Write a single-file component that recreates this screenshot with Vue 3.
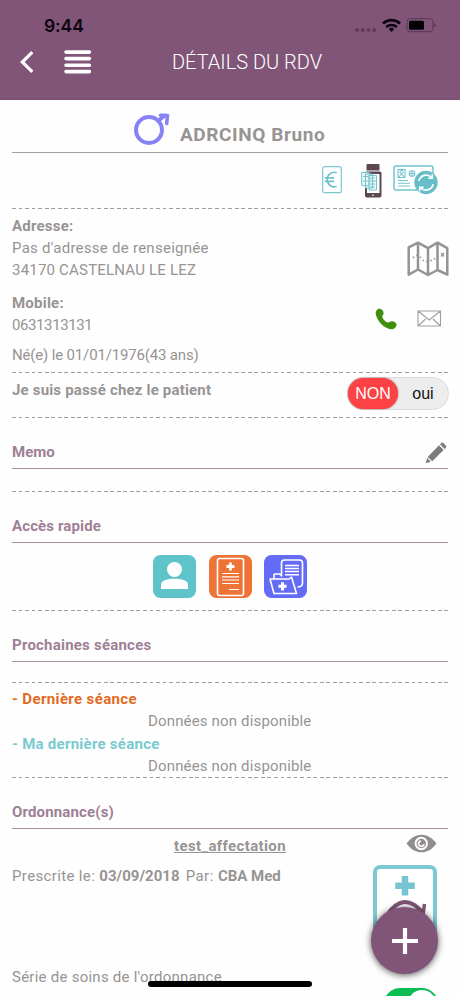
<script setup>
import { ref } from 'vue'

const visited = ref(false)
const sessions = [
  { id: 'last', label: '- Dernière séance', value: 'Données non disponible' },
  { id: 'mine', label: '- Ma dernière séance', value: 'Données non disponible' },
]
</script>

<template>
  <div class="screen">
    <header class="header">
      <div class="status">
        <span class="time">9:44</span>
        <svg class="status-icons" width="84" height="18" viewBox="0 0 84 18">
          <g fill="#5f3a5a">
            <circle cx="5" cy="13" r="1.900" /><circle cx="10.800" cy="13" r="1.900" />
            <circle cx="16.500" cy="13" r="1.900" /><circle cx="22.200" cy="13" r="1.900" />
          </g>
          <g fill="none" stroke="#0d0312" stroke-width="2.700">
            <path d="M31 6.500a12.500 12.500 0 0 1 17 0" />
            <path d="M34.200 10a8 8 0 0 1 10.600 0" />
          </g>
          <path d="M36.700 12a4.300 4.300 0 0 1 5.600 0L39.500 15z" fill="#0d0312" />
          <rect x="55" y="1.700" width="26" height="13" rx="3.500" fill="none" stroke="#5a3554" stroke-width="1" />
          <rect x="57" y="3.700" width="15" height="9" rx="1.500" fill="#050006" />
          <path d="M82.300 6.200q1.600.6 1.600 2t-1.600 2z" fill="#5a3554" />
        </svg>
      </div>
      <div class="nav">
        <svg class="back" width="16" height="24" viewBox="0 0 16 24">
          <path d="M13.300 2.200 3.300 12l10 9.800" fill="none" stroke="#fff" stroke-width="3.200" />
        </svg>
        <svg class="burger" width="28" height="24" viewBox="0 0 28 24">
          <path d="M2 2.100h23.400M2 8.600h23.400M2 15.200h23.400M2 21.600h23.400" stroke="#fff" stroke-width="3.600" stroke-linecap="round" />
        </svg>
        <h1 class="title">DÉTAILS DU RDV</h1>
      </div>
    </header>

    <main class="content">
      <section class="patient">
        <svg width="40" height="36" viewBox="0 0 40 36">
          <g fill="none" stroke="#8783f6" stroke-width="4">
            <circle cx="16" cy="19" r="13" />
            <path d="m25.500 9.500 7-5.500" />
            <path d="M27.500 4.300 34.500 4.500 33.700 12.500" stroke-linejoin="round" stroke-linecap="round" stroke-width="3.600" />
          </g>
        </svg>
        <span class="patient-name">ADRCINQ Bruno</span>
      </section>

      <section class="tools">
        <svg width="20" height="28" viewBox="0 0 20 28">
          <rect x=".7" y=".7" width="18.600" height="26" rx="2" fill="#fff" stroke="#7cc8d0" stroke-width="1.200" />
          <path d="M14.800 6.700A7.300 7.300 0 1 0 14.800 20.500M2.700 11.800h9.500M2.700 15.300h9.500" fill="none" stroke="#6fc2c9" stroke-width="1.700" />
        </svg>
        <svg class="reader" width="22" height="34" viewBox="0 0 22 34">
          <path d="M6.500 0h11q1 0 1 1v5.500h-13V1q0-1 1-1z" fill="#5c4852" />
          <rect x="4" y="7.500" width="16.500" height="26" rx="1.800" fill="#5c4852" />
          <rect x="6" y="10" width="12.500" height="19" fill="#fff" />
          <g fill="#eafafa" stroke="#72c5c8" stroke-width="1">
            <path d="M8 11.500h7.500V26H8zM4.500 10h7v14h-7zM.6 8.600h7.500v13H.6z" />
            <path d="M2 12.500h5M4.500 10.500v4M2 17h5M9 14h5M9 17h6M9 20h5M9 23h5" fill="none" />
          </g>
          <circle cx="12" cy="31.200" r=".8" fill="#fff" />
        </svg>
        <svg class="card" width="46" height="30" viewBox="0 0 46 30">
          <rect x="1" y="1" width="39" height="24" rx="2" fill="#fff" stroke="#72c5cf" stroke-width="1.500" />
          <g fill="none" stroke="#72c5cf" stroke-width="1.100">
            <rect x="5" y="4.500" width="7" height="8" />
            <circle cx="8.500" cy="7" r="1.500" /><path d="M6 12q2.500-5 5 0" />
            <circle cx="19" cy="8.500" r="2.800" /><path d="M16.500 8.500h5M19 6v5" />
            <path d="M5 15.500h10M5 18.200h12M5 21h12" />
          </g>
          <circle cx="33" cy="17.500" r="11.700" fill="#67bdc8" />
          <g fill="none" stroke="#fff" stroke-width="1.600">
            <path d="M25.800 16a7.500 7.500 0 0 1 13-3.200M40.200 19.300a7.500 7.500 0 0 1-13 3.200" />
            <path d="M39.300 9.200v4h-4M26.700 26.200v-4h4" />
          </g>
        </svg>
      </section>

      <section class="details dashed-top">
        <div class="block address">
          <div>
            <p class="line strong">Adresse:</p>
            <p class="line street">Pas d'adresse de renseignée</p>
            <p class="line city">34170 CASTELNAU LE LEZ</p>
          </div>
          <svg class="map" width="42" height="36" viewBox="0 0 42 36">
            <path d="M1.700 6.300 11 1.700l10 5.500 9.500-5.500 9.800 5.500v26.500L30.500 29 21 34l-10-5.500-9.300 5.200zM11 2v26.500M21 7.200V34M30.500 2v27" fill="none" stroke="#979392" stroke-width="2.500" stroke-linejoin="round" />
            <path d="M6 17q4-5 8 0t8 3q6-1 9-6" fill="none" stroke="#979392" stroke-width="1.500" stroke-dasharray="1.500 2.500" />
            <path d="m34 12 3 3.500m0-3.500-3 3.500" stroke="#979392" stroke-width="1.200" />
          </svg>
        </div>
        <div class="block mobile">
          <div>
            <p class="line strong mobile-label">Mobile:</p>
            <p class="line number">0631313131</p>
          </div>
          <svg class="phone" width="22" height="22" viewBox="0 0 22 22">
            <path d="M.7 5C.5 2.500 3 .5 4.800.7 7 1 8.600 3 8.600 5.200c0 1.500-1.300 2-1.300 3.200 0 2.300 3.600 6 6 6 1.200 0 1.900-1.200 3.300-1.200 2.300 0 4.900 1.500 4.900 3.600 0 2.200-2.200 4.600-5 4.500C8.800 21 .9 11.500.7 5z" fill="#3f8f0c" />
          </svg>
          <svg class="mail" width="25" height="17" viewBox="0 0 25 17">
            <path d="M1 1h22.500v15H1zM1 1l11.200 9L23.500 1M1 16l7.500-7M23.500 16 16 9" fill="none" stroke="#a19e9d" stroke-width="1.100" />
          </svg>
        </div>
        <p class="line birth">Né(e) le 01/01/1976(43 ans)</p>
      </section>

      <section class="visited dashed-top">
        <p class="line strong visited-label">Je suis passé chez le patient</p>
        <div class="switch" @click="visited = !visited">
          <span class="switch-on">NON</span>
          <span class="switch-off">oui</span>
        </div>
      </section>

      <section class="memo dashed-top">
        <div class="heading">
          <h2>Memo</h2>
          <svg class="pencil" width="22" height="22" viewBox="0 0 22 22">
            <path d="m.7 21.300 1.500-5.200 3.600 3.600zM2.700 14.900 14 3.300l4.600 4.600L7.300 19.200zM15 2.300l1.200-1.200q1.100-1 2.200 0l2.400 2.400q1 1.100 0 2.200l-1.200 1.200z" fill="#7d7b7c" />
          </svg>
        </div>
      </section>

      <section class="quick dashed-top">
        <div class="heading"><h2 class="quick-title">Accès rapide</h2></div>
        <div class="apps">
          <svg width="43" height="43" viewBox="0 0 43 43">
            <rect width="43" height="43" rx="7.500" fill="#5fc3ca" />
            <circle cx="21.500" cy="14.500" r="7.500" fill="#fff" />
            <path d="M8 34v-4.500C8 25.500 15 23.800 21.500 23.800S35 25.500 35 29.500V34z" fill="#fff" />
          </svg>
          <svg width="43" height="43" viewBox="0 0 43 43">
            <rect width="43" height="43" rx="7.500" fill="#ed7436" />
            <rect x="8.500" y="3.500" width="26" height="37" rx="2" fill="none" stroke="#fff" stroke-width="1.600" />
            <path d="M21.500 7.500v8M17.500 11.500h8" stroke="#fff" stroke-width="2.800" />
            <path d="M13 18.500h17M13 21.800h17M13 25h17M13 28.500h17M20 34.500h10" stroke="#fff" stroke-width="1.200" />
          </svg>
          <svg width="43" height="43" viewBox="0 0 43 43">
            <rect width="43" height="43" rx="7.500" fill="#646cf6" />
            <g fill="none" stroke="#fff" stroke-width="1.600" stroke-linejoin="round">
              <path d="M17.500 21V8q0-3 3-3h15q3 0 3 3v20q0 4-5 4M21 10.500h14M21 13.500h14M21 16.500h14M21 19.800h14" />
              <path d="M10 24v-4q0-1 1-1h5l2 2.500M6 24h19l2.500-2 5 16.500H10z" fill="#646cf6" />
              <path d="M18.500 27.200v8.200M14.400 31.300h8.200" stroke-width="3" />
            </g>
          </svg>
        </div>
      </section>

      <section class="next dashed-top">
        <div class="heading"><h2 class="next-title">Prochaines séances</h2></div>
      </section>

      <section class="sessions dashed-top">
        <template v-for="s in sessions" :key="s.id">
          <p class="line strong" :class="s.id">{{ s.label }}</p>
          <p class="line empty">{{ s.value }}</p>
        </template>
      </section>

      <section class="orders dashed-top">
        <div class="heading"><h2 class="orders-title">Ordonnance(s)</h2></div>
        <div class="order-head">
          <a class="order-name">test_affectation</a>
          <svg class="eye" width="31" height="19" viewBox="0 0 31 19">
            <path d="M.5 9.500C9-2.300 22-2.300 30.500 9.500 22 21.300 9 21.300.5 9.500z" fill="#918d8c" />
            <circle cx="15.300" cy="9.500" r="5.700" fill="none" stroke="#fff" stroke-width="2" />
            <path d="M15 7a2.700 2.700 0 1 0 3 3" fill="none" stroke="#fff" stroke-width="1.600" />
          </svg>
        </div>
        <p class="line prescribed">
          <span class="pre-a">Prescrite le: </span><b class="pre-b">03/09/2018</b><span class="pre-c">Par: </span><b class="pre-d">CBA Med</b>
        </p>
        <p class="line series">Série de soins de l'ordonnance</p>
      </section>
    </main>

    <svg class="document" width="66" height="90" viewBox="0 0 66 90">
      <rect x="2" y="2" width="60" height="86" rx="5" fill="#fff" stroke="#7cc8d3" stroke-width="4" />
      <path d="M32 11v19.500M22.200 20.700h19.600" stroke="#77c5d2" stroke-width="6.500" />
      <path d="M14 50Q31 25 50 48" fill="none" stroke="#805577" stroke-width="4" />
      <path d="m51.500 39-1.500 11-9-3" fill="none" stroke="#805577" stroke-width="3.500" />
    </svg>
    <div class="toggle"><span class="knob"></span></div>
    <button class="fab" aria-label="Ajouter">
      <svg width="26" height="26" viewBox="0 0 26 26">
        <path d="M13 0v26M0 13h26" stroke="#fff" stroke-width="4.200" />
      </svg>
    </button>
    <div class="home-bar"></div>
  </div>
</template>

<style>
body {
  margin: 0;
  overflow: hidden;
  background: #fff;
}
</style>

<style scoped>
.screen {
  position: relative;
  width: 460px;
  height: 996px;
  overflow: hidden;
  background: #fefefe;
  color: #979493;
  font-family: Roboto, "Liberation Sans", sans-serif;
}
svg { display: block; flex: none; }
p, h1, h2 { margin: 0; }
.header {
  height: 100px;
  box-sizing: border-box;
  background: #805577;
  border-bottom: 1px solid #7a4f71;
}
.status {
  display: flex;
  justify-content: space-between;
  height: 44px;
  padding: 17px 24px 0 44px;
  box-sizing: border-box;
}
.time {
  font: 600 17.500px/18px Inter, sans-serif;
  color: #0d0312;
  letter-spacing: -0.100px;
}
.status-icons { margin-right: .5px; }
.nav { display: flex; align-items: center; height: 36px; padding-left: 19px; }
.burger { margin-left: 29px; }
.title {
  margin-left: 80px;
  font-size: 20px;
  font-weight: 300;
  line-height: 24px;
  color: #fff;
  white-space: nowrap;
}
.content { padding: 0 12px; }
.patient {
  display: flex;
  height: 52.500px;
  padding-left: 121px;
  border-bottom: 1.500px solid #a79da4;
  box-sizing: border-box;
}
.patient svg { margin-top: 11px; }
.patient-name {
  margin: 22.500px 0 0 7px;
  font-size: 19px;
  font-weight: 700;
  line-height: 24px;
  letter-spacing: .6px;
}
.tools {
  display: flex;
  justify-content: flex-end;
  height: 55.500px;
  padding: 11px 9px 0 0;
  box-sizing: border-box;
}
.tools svg:first-child { margin-top: 2px; }
.reader { margin-left: 19px; }
.card { margin-left: 10px; margin-top: 1.500px; }
.dashed-top {
  background: repeating-linear-gradient(90deg, #a09c9e 0 3.800px, transparent 3.800px 6.550px) 0 0 / 100% 1.200px no-repeat;
}
.line { font-size: 15px; line-height: 22px; white-space: nowrap; }
.strong { font-weight: 700; letter-spacing: .22px; }
.street { letter-spacing: .26px; }
.city { letter-spacing: .2px; }
.number { letter-spacing: -.4px; }
.details { height: 163.500px; padding-top: 7px; box-sizing: border-box; }
.block { display: flex; }
.address { justify-content: space-between; }
.map { margin: 26px -1px 0 0; }
.mobile { margin-top: 10.500px; }
.mobile > div { flex: 1; }
.phone { margin: 16px 20px 0 0; }
.mail { margin: 18px 6px 0 0; }
.birth { margin-top: 8px; letter-spacing: -.16px; }
.visited {
  display: flex;
  justify-content: space-between;
  height: 45.500px;
  padding-top: 5.500px;
  box-sizing: border-box;
}
.visited-label { margin-top: 2px; letter-spacing: .18px; }
.switch {
  display: flex;
  width: 102px;
  height: 33px;
  margin-right: -1px;
  box-sizing: border-box;
  border: 1px solid #dcdcdc;
  border-radius: 17px;
  background: #ededed;
  font: 16px/31px "Liberation Sans", sans-serif;
  color: #111;
  text-align: center;
}
.switch-on {
  width: 50px;
  border-radius: 16px;
  background: #fd4245;
  box-shadow: 0 0 2px #8a5a5a;
  color: #fff;
}
.switch-off { flex: 1; }
.heading {
  display: flex;
  justify-content: space-between;
  height: 52px;
  padding-top: 24px;
  box-sizing: border-box;
  border-bottom: 1.500px solid #a78d9f;
}
h2 { font-size: 15px; line-height: 22px; font-weight: 700; color: #9e8096; }
.quick-title { letter-spacing: .12px; }
.next-title { letter-spacing: .22px; }
.orders-title { letter-spacing: .15px; }
.pencil { margin: 1px 1px 0 0; }
.memo { height: 74px; }
.quick { height: 119px; }
.apps { display: flex; justify-content: center; gap: 12.500px; padding: 12px 0 0; }
.next { height: 71.500px; }
.sessions { height: 95.500px; padding-top: 6.500px; box-sizing: border-box; }
.sessions .line { line-height: 22.300px; }
.last { color: #e36a22; letter-spacing: .36px; }
.mine { color: #7bcad0; letter-spacing: .26px; }
.empty { padding-left: 136px; letter-spacing: .16px; }
.orders .heading { padding-top: 23.500px; }
.order-head { display: flex; justify-content: space-between; height: 24px; }
.order-name {
  margin: 6px 0 0 162px;
  font-size: 15px;
  line-height: 22px;
  font-weight: 700;
  letter-spacing: .36px;
  text-decoration: underline;
}
.eye { margin: 5px 11px 0 0; }
.prescribed { margin-top: 12px; }
.pre-a { white-space: pre; letter-spacing: .36px; }
.pre-b { letter-spacing: .04px; }
.pre-c { margin-left: 6px; white-space: pre; letter-spacing: .45px; }
.series { margin-top: 79px; letter-spacing: .25px; }
.document { position: absolute; left: 373px; top: 864.500px; }
.fab {
  position: absolute;
  left: 371px;
  top: 907px;
  display: grid;
  place-items: center;
  width: 67px;
  height: 67px;
  padding: 0;
  border: 0;
  border-radius: 50%;
  background: #805577;
  box-shadow: 0 1px 7px #000a;
}
.toggle {
  position: absolute;
  left: 384px;
  top: 988px;
  width: 54px;
  height: 32px;
  border-radius: 16px;
  background: #0cbd52;
}
.knob {
  position: absolute;
  right: 2px;
  top: 2px;
  width: 28px;
  height: 28px;
  border-radius: 50%;
  background: #fff;
}
.home-bar {
  position: absolute;
  left: 148px;
  top: 981px;
  width: 164px;
  height: 5.500px;
  border-radius: 3px;
  background: #000;
}
</style>
